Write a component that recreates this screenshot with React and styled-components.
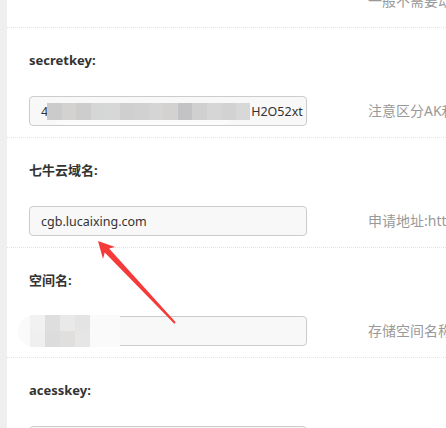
import React from "react";
import styled, { createGlobalStyle } from "styled-components";

const GlobalStyle = createGlobalStyle`
  html, body {
    margin: 0;
    padding: 0;
    background: #ffffff;
  }
  body {
    font-family: "Noto Sans", "Noto Sans CJK SC", sans-serif;
  }
`;

const fields = [
  {
    label: "secretkey:",
    hint: "注意区分AK和SK",
    value: "secret",
  },
  {
    label: "七牛云域名:",
    hint: "申请地址:http://portal.qiniu.com",
    value: "domain",
  },
  {
    label: "空间名:",
    hint: "存储空间名称",
    value: "bucket",
  },
  {
    label: "acesskey:",
    hint: "",
    value: "access",
  },
];

const secretBlocks = [
  "#cbcbcb", "#d4d2d0", "#cdcdcd", "#d5d7d6", "#d7d7d7", "#cfcfcf",
  "#d1d1d1", "#d5d5d5", "#d3d2d0", "#c3c3c5", "#d0d0d0", "#d6d6d6",
  "#d2d2d2", "#d8d8d8",
];

const bucketBlocks = [
  "#f1f1f1", "#dedede", "#e9e9e9", "#e4e4e4",
  "#efefef", "#dcdcdc", "#e0dfdd", "#e6e6e6",
];

const Page = () => (
  <Viewport>
    <GlobalStyle />
    <Sidebar />
    <Content>
      <TopRow>
        <Hint>一般不需要动</Hint>
      </TopRow>
      {fields.map((f) => (
        <Row key={f.label}>
          <Label>{f.label}</Label>
          <Line>
            <FieldBox>
              {f.value === "secret" && (
                <>
                  <span>4</span>
                  <SecretMosaic>
                    {secretBlocks.map((c, i) => (
                      <Tile key={i} style={{ background: c }} />
                    ))}
                  </SecretMosaic>
                  <span>H2O52xt</span>
                </>
              )}
              {f.value === "domain" && <span>cgb.lucaixing.com</span>}
              {f.value === "bucket" && (
                <BucketMosaic>
                  {bucketBlocks.map((c, i) => (
                    <Tile key={i} style={{ background: c }} />
                  ))}
                </BucketMosaic>
              )}
            </FieldBox>
            <Hint>{f.hint}</Hint>
          </Line>
        </Row>
      ))}
    </Content>
    <Arrow viewBox="0 0 446 428" width="446" height="428">
      <polygon
        points="98,241 115,247 109.1,248.4 175.7,322.3 174.3,323.7 104.7,252.6 103,259"
        fill="#f53a3a"
      />
    </Arrow>
  </Viewport>
);

const Viewport = styled.div`
  position: relative;
  display: flex;
  width: 100vw;
  height: 100vh;
  overflow: hidden;
  background: #ffffff;
`;

const Sidebar = styled.div`
  flex: 0 0 7px;
  background: #efefef;
`;

const Content = styled.div`
  flex: 1;
  min-width: 0;
`;

const TopRow = styled.div`
  height: 27px;
  display: flex;
  align-items: flex-end;
  padding-left: 300px;
  padding-bottom: 16px;
  box-sizing: border-box;
  line-height: 20px;
`;

const Row = styled.div`
  border-top: 1px dotted #e4e4e4;
  padding: 22px 0 11px 22px;
`;

const Label = styled.div`
  font-size: 13px;
  line-height: 20px;
  font-weight: bold;
  color: #333333;
  margin-bottom: 26px;
`;

const Line = styled.div`
  display: flex;
  align-items: center;
  white-space: nowrap;
`;

const FieldBox = styled.div`
  position: relative;
  flex: none;
  width: 278px;
  height: 30px;
  box-sizing: border-box;
  border: 1px solid #cccccc;
  border-radius: 4px;
  background: #f8f8f8;
  padding: 0 11px;
  display: flex;
  align-items: center;
  font-size: 12.5px;
  color: #333333;
`;

const SecretMosaic = styled.span`
  position: relative;
  display: flex;
  flex: none;
  height: 17px;
  margin: 1px 1px 0 -1px;
  &::after {
    content: "";
    position: absolute;
    left: 8px;
    right: 20px;
    top: 17px;
    height: 5px;
    border-radius: 0 0 6px 6px;
    background: #fbfbfb;
  }
`;

const BucketMosaic = styled.span`
  position: absolute;
  left: -12px;
  top: -2px;
  width: 102px;
  height: 32px;
  border-radius: 16px 0 0 16px;
  background: #fafafa;
  display: grid;
  grid-template-columns: repeat(4, 15px);
  grid-template-rows: 16px 16px;
  padding-left: 12px;
  box-sizing: border-box;
`;

const Tile = styled.span`
  display: block;
  flex: none;
  width: 14.5px;
  height: 100%;
`;

const Hint = styled.span`
  margin-left: 61px;
  font-size: 14px;
  line-height: 20px;
  color: #999999;
  white-space: nowrap;
`;

const Arrow = styled.svg`
  position: absolute;
  top: 0;
  left: 0;
  pointer-events: none;
`;

export default Page;
